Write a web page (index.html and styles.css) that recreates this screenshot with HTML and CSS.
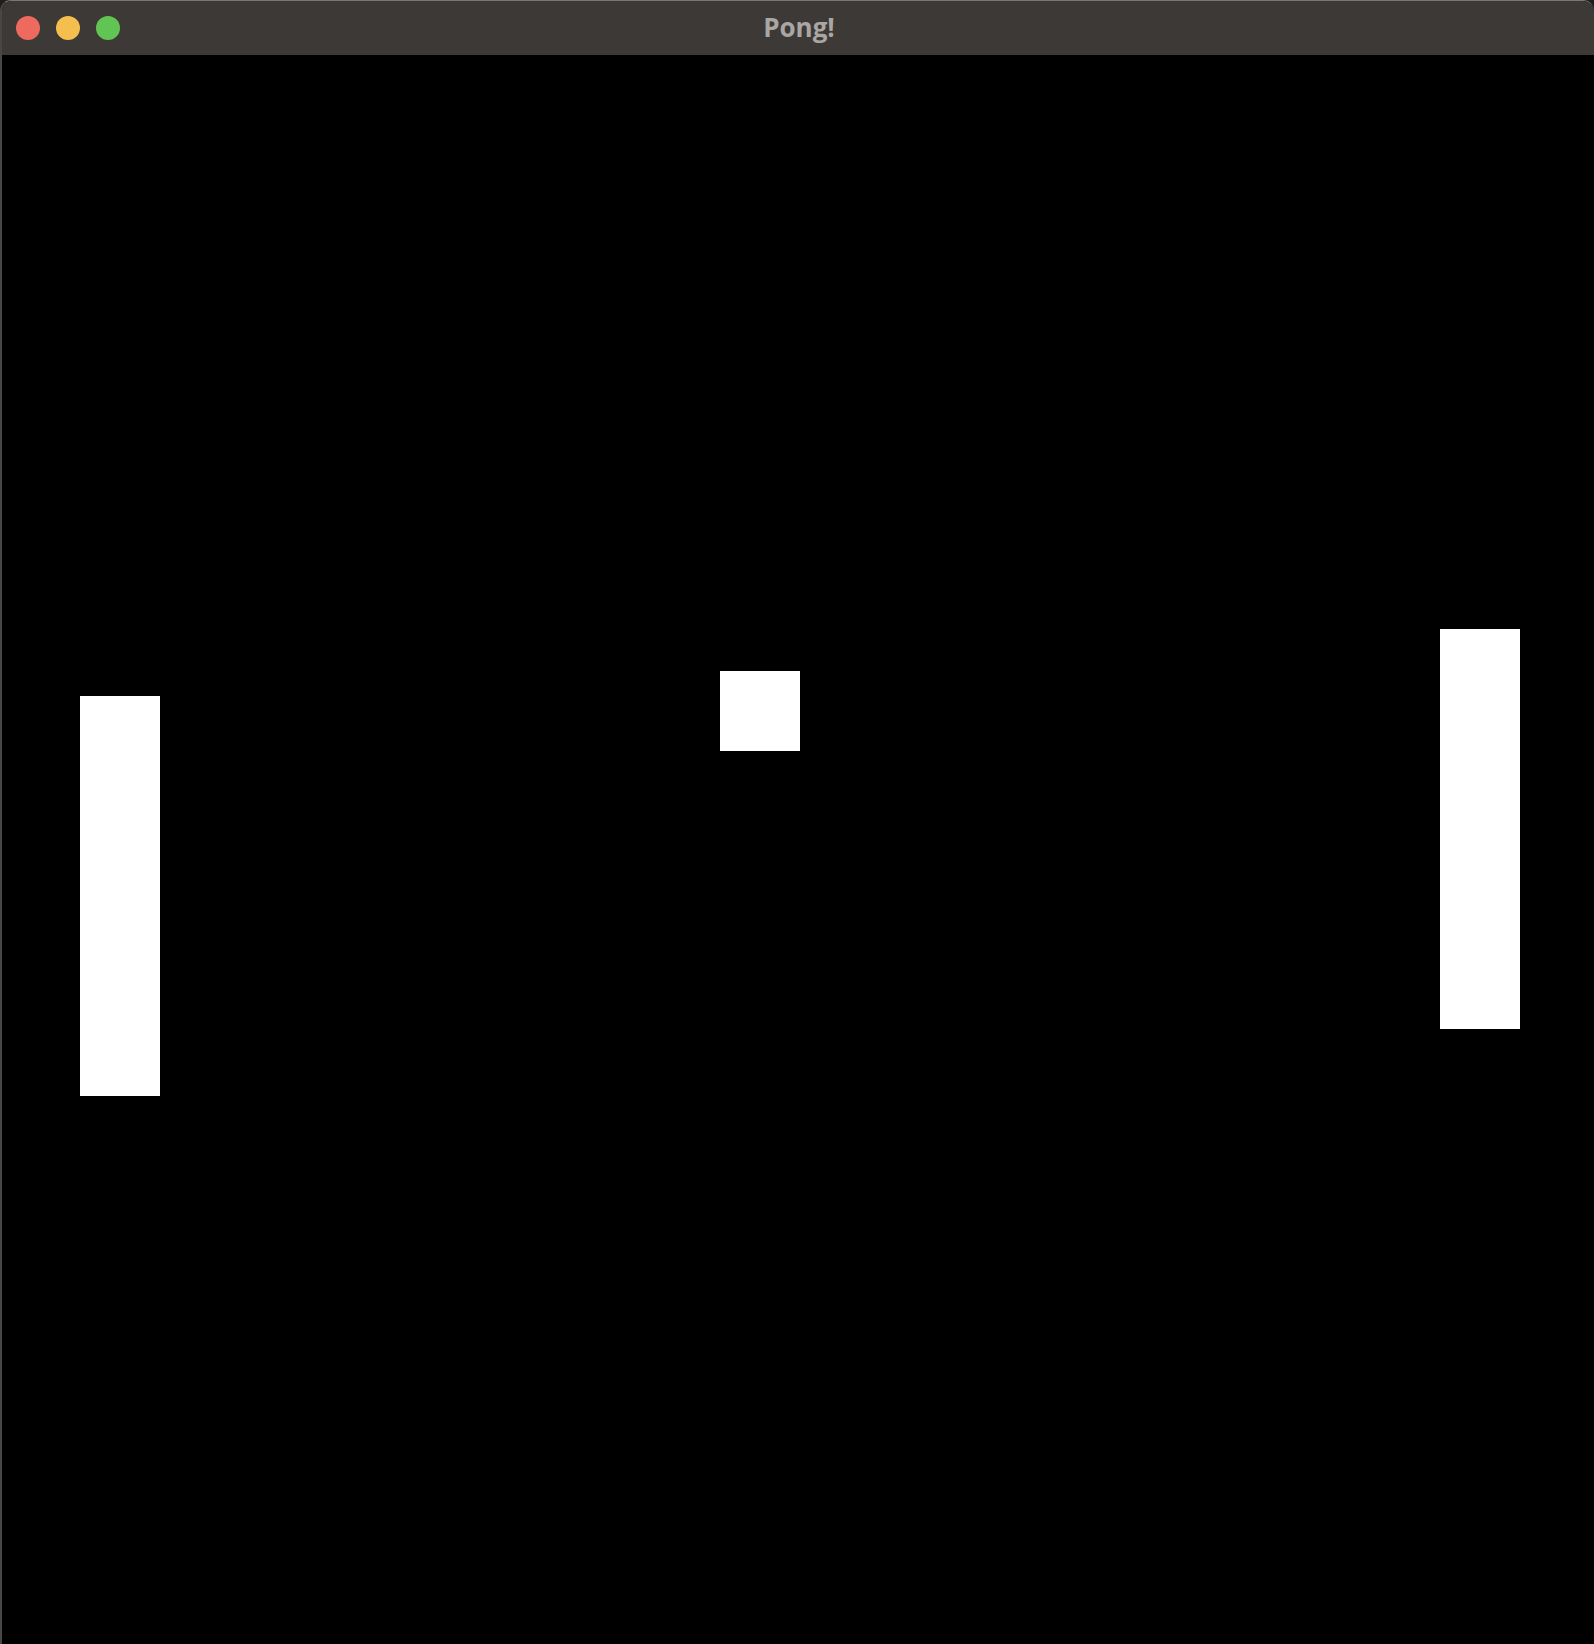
FILE: index.html
```html
<!DOCTYPE html>
<html>
<head>
<meta charset="utf-8">
<link rel="stylesheet" href="styles.css">
</head>
<body>
<div class="window">
  <div class="titlebar">
    <div class="lights">
      <span class="light red"></span>
      <span class="light yellow"></span>
      <span class="light green"></span>
    </div>
    <div class="title">Pong!</div>
  </div>
  <div class="canvas">
    <div class="paddle left"></div>
    <div class="ball"></div>
    <div class="paddle right"></div>
  </div>
</div>
</body>
</html>
```

FILE: styles.css
```css
html, body {
  margin: 0;
  padding: 0;
  background: #1e1e1e;
}
body {
  width: 1594px;
  height: 1644px;
  overflow: hidden;
}
.window {
  width: 1594px;
  height: 1644px;
  box-sizing: border-box;
  border-radius: 11px 11px 0 0;
  overflow: hidden;
  display: flex;
  flex-direction: column;
  background: #000;
  border-top: 1px solid #7a7674;
  border-left: 2px solid #4a4644;
}
.titlebar {
  height: 54px;
  flex: none;
  background: #3d3936;
  position: relative;
  display: flex;
  align-items: center;
}
.lights {
  display: flex;
  gap: 16px;
  padding-left: 14px;
  margin-top: -1px;
}
.light {
  width: 24px;
  height: 24px;
  border-radius: 50%;
  display: block;
}
.red { background: #ee6a5f; }
.yellow { background: #f5bf4f; }
.green { background: #61c554; }
.title {
  position: absolute;
  left: 0;
  right: 0;
  top: 0;
  height: 54px;
  line-height: 52px;
  text-align: center;
  font-family: "Open Sans", "Liberation Sans", sans-serif;
  font-weight: 700;
  font-size: 26px;
  color: #aaa6a3;
  padding-left: 2px;
}
.canvas {
  flex: 1;
  position: relative;
  background: #000;
}
.paddle, .ball {
  position: absolute;
  background: #fff;
}
.paddle {
  width: 80px;
  height: 400px;
}
.paddle.left {
  left: 78px;
  top: 641px;
}
.paddle.right {
  left: 1438px;
  top: 574px;
}
.ball {
  width: 80px;
  height: 80px;
  left: 718px;
  top: 616px;
}
```
